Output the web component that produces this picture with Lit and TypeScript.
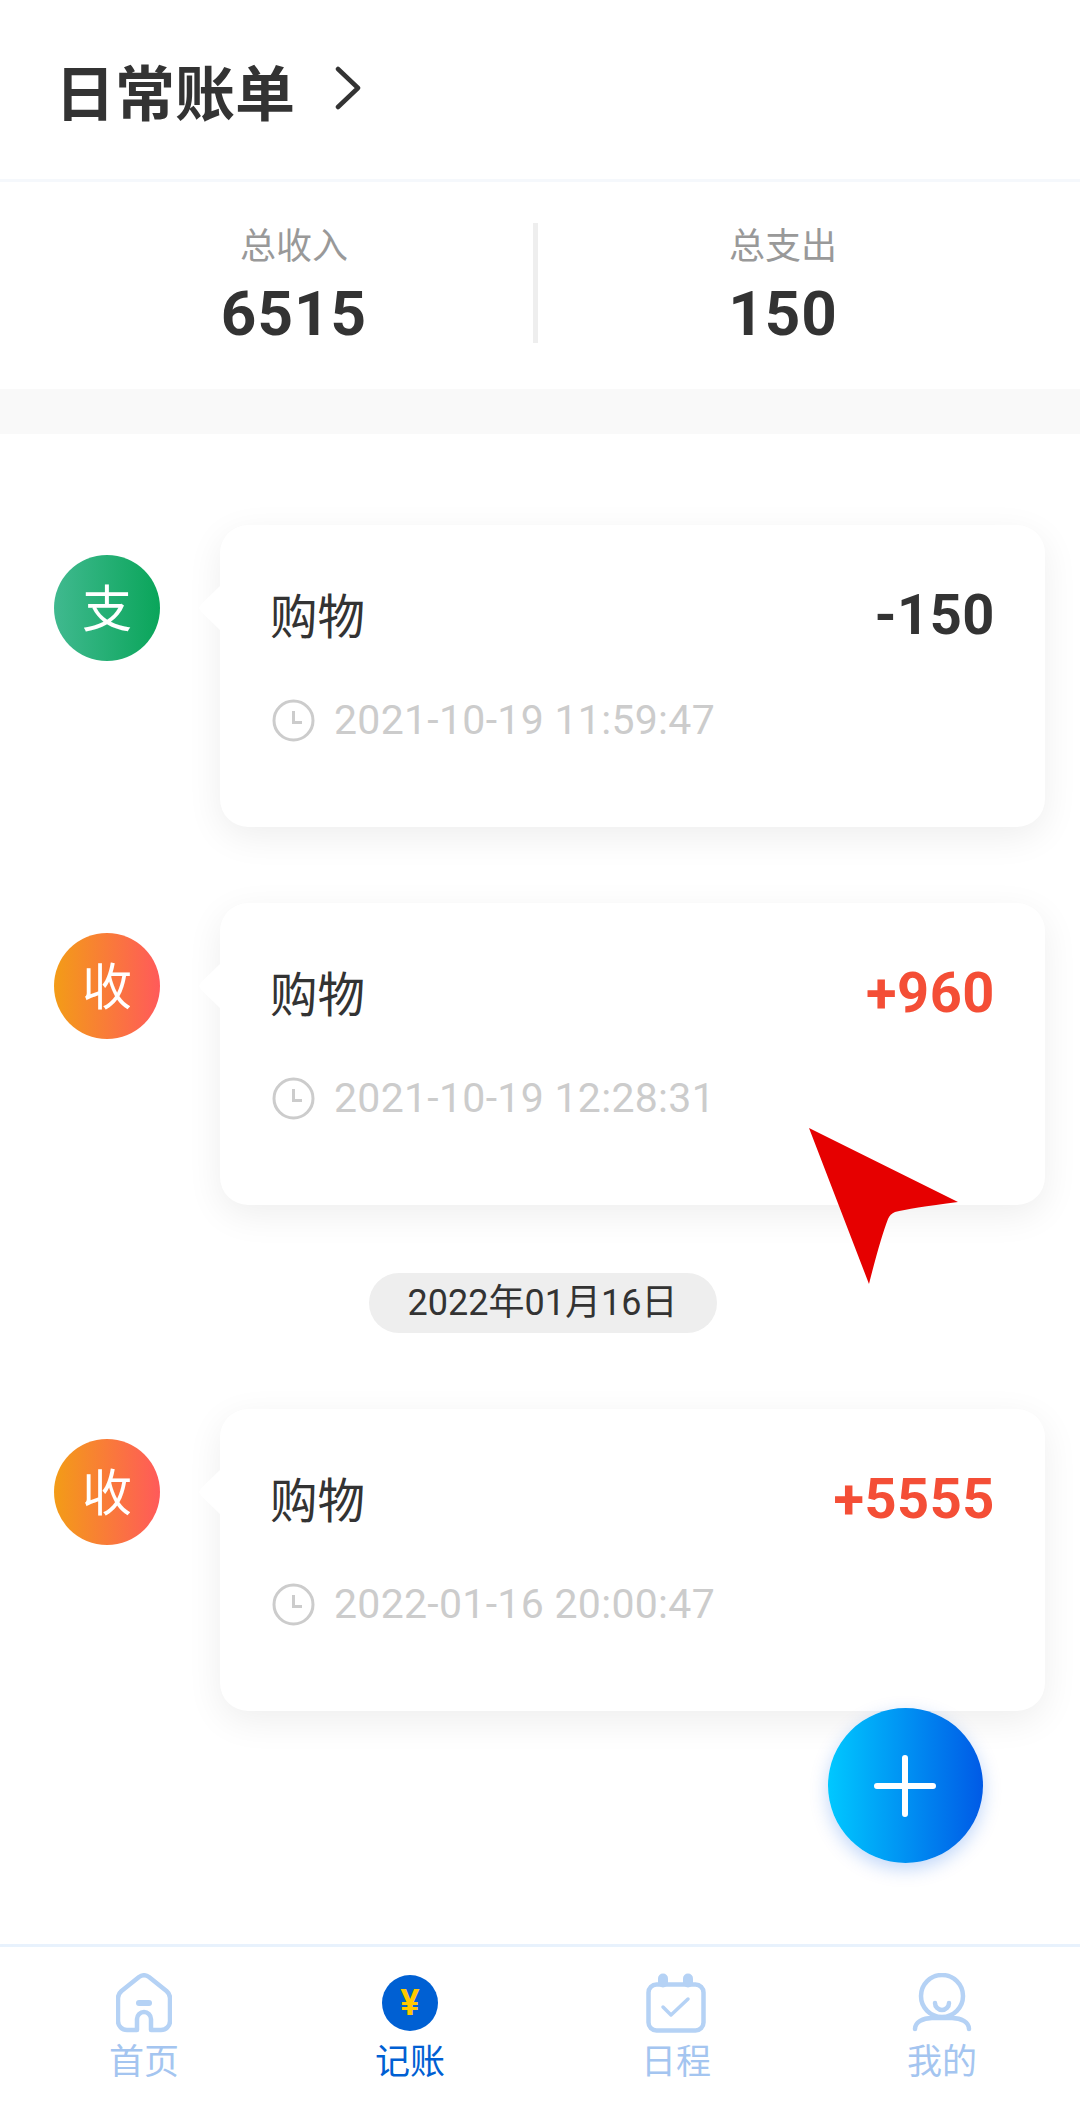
import { LitElement, html, css, svg } from 'lit';
import { customElement } from 'lit/decorators.js';
import { classMap } from 'lit/directives/class-map.js';

type Entry = { kind: 'in' | 'out'; amount: string; time: string };

const GROUPS: { date?: string; items: Entry[] }[] = [
  {
    items: [
      { kind: 'out', amount: '-150', time: '2021-10-19 11:59:47' },
      { kind: 'in', amount: '+960', time: '2021-10-19 12:28:31' },
    ],
  },
  {
    date: '2022年01月16日',
    items: [{ kind: 'in', amount: '+5555', time: '2022-01-16 20:00:47' }],
  },
];

const homeIcon = svg`<path d="M21 57H11a9 9 0 0 1-9-9V25q0-4 3.500-7L23 4q5-3.500 10 0l17.500 14q3.500 3 3.500 7v23a9 9 0 0 1-9 9H35V46a7 7 0 0 0-14 0z" fill="none" stroke="currentColor" stroke-width="4.500" stroke-linejoin="round"/><path d="M23 30h10" stroke="currentColor" stroke-width="6" stroke-linecap="round"/>`;
const calendarIcon = svg`<rect x="2.500" y="11.500" width="55" height="46" rx="8" fill="none" stroke="currentColor" stroke-width="4.500"/><rect x="12" y="0.500" width="10" height="14" rx="5" fill="currentColor"/><rect x="37" y="0.500" width="10" height="14" rx="5" fill="currentColor"/><path d="M17 34l8 8 17-16" fill="none" stroke="currentColor" stroke-width="3.500" stroke-linecap="round" stroke-linejoin="round"/>`;
const userIcon = svg`<circle cx="30" cy="23" r="21" fill="none" stroke="currentColor" stroke-width="4.500"/><path d="M23 30a7 7 0 0 0 14 0" fill="none" stroke="currentColor" stroke-width="4.500" stroke-linecap="round"/><path d="M3 56c0-7 8-11 17-11h20c9 0 17 4 17 11" fill="none" stroke="currentColor" stroke-width="4.500" stroke-linecap="round"/>`;

@customElement('app-root')
export class AppRoot extends LitElement {
  static styles = css`
    :host {
      display: block;
      position: relative;
      width: 1080px;
      height: 2120px;
      overflow: hidden;
      background: #fff;
      color: #333;
      font-family: Roboto, 'Noto Sans CJK SC', sans-serif;
    }

    .page {
      display: flex;
      flex-direction: column;
      height: 100%;
    }

    .header {
      display: flex;
      align-items: center;
      gap: 40px;
      height: 179px;
      flex: none;
      padding-left: 55px;
      border-bottom: 3px solid #f5f8fc;
      font-size: 60px;
      font-weight: 700;
    }

    .header svg {
      display: block;
      margin-top: -4px;
    }

    .stats {
      display: grid;
      grid-template-columns: 478px 5px 490px;
      align-items: start;
      height: 207px;
      flex: none;
      box-sizing: border-box;
      padding: 40px 0 0 55px;
    }

    .stat {
      display: flex;
      flex-direction: column;
      align-items: center;
    }

    .stat-label {
      font-size: 36px;
      line-height: 50px;
      color: #999;
    }

    .stat-value {
      margin-top: 4px;
      font-size: 62px;
      line-height: 76px;
      font-weight: 700;
      letter-spacing: 1px;
    }

    .divider {
      height: 120px;
      margin-top: 1px;
      background: #eee;
    }

    .band {
      height: 45px;
      flex: none;
      background: #f9f9f9;
    }

    .list {
      flex: 1;
      min-height: 0;
      padding-top: 91px;
    }

    .day {
      display: flex;
      justify-content: center;
      margin: -8px 0 76px;
      padding-left: 5px;
    }

    .pill {
      width: 348px;
      height: 60px;
      border-radius: 30px;
      background: #eee;
      font-size: 36px;
      line-height: 60px;
      text-align: center;
    }

    .row {
      display: flex;
      align-items: flex-start;
      padding: 0 35px 0 54px;
      margin-bottom: 76px;
    }

    .avatar {
      display: flex;
      align-items: center;
      justify-content: center;
      flex: none;
      width: 106px;
      height: 106px;
      margin: 30px 60px 0 0;
      padding-bottom: 6px;
      box-sizing: border-box;
      border-radius: 50%;
      color: #fff;
      font-size: 50px;
    }

    .avatar.out {
      background: linear-gradient(90deg, #40b98f, #0aa55a);
    }

    .avatar.in {
      background: linear-gradient(90deg, #f39c17, #ff5a5a);
    }

    .card {
      position: relative;
      flex: 1;
      height: 302px;
      box-sizing: border-box;
      padding: 50px 50px 0 52px;
      border-radius: 28px;
      background: #fff;
      box-shadow: 0 10px 36px rgba(0, 0, 0, 0.07);
    }

    .card::before {
      content: '';
      position: absolute;
      left: -21px;
      top: 60px;
      width: 22px;
      height: 46px;
      background: #fff;
      clip-path: polygon(100% 0, 100% 100%, 10% 58%, 0 50%, 10% 42%);
    }

    .top {
      display: flex;
      align-items: center;
      justify-content: space-between;
      height: 80px;
    }

    .title {
      margin: -4px 0 0 -2px;
      font-size: 47.500px;
    }

    .amount {
      font-size: 56px;
      font-weight: 700;
      letter-spacing: 0.5px;
    }

    .amount.in {
      color: #f44e36;
    }

    .time {
      display: flex;
      align-items: center;
      gap: 19px;
      height: 50px;
      margin-top: 40px;
      color: #ccc;
      font-size: 41px;
      letter-spacing: 0.3px;
    }

    .time svg {
      flex: none;
    }

    .tabs {
      display: grid;
      grid-template-columns: repeat(4, 266px);
      height: 173px;
      flex: none;
      padding-left: 11px;
      border-top: 3px solid #e8f2fd;
    }

    .tab {
      display: flex;
      flex-direction: column;
      align-items: center;
      padding-top: 26px;
      color: #a4c5f0;
      font-size: 35px;
      line-height: 60px;
    }

    .tab svg {
      display: block;
      color: #b5d2f5;
    }

    .tab.active {
      color: #0060d3;
    }

    .coin {
      display: flex;
      align-items: center;
      justify-content: center;
      width: 56px;
      height: 60px;
    }

    .coin span {
      display: block;
      width: 56px;
      height: 56px;
      border-radius: 50%;
      background: #0060d3;
      color: #ffc800;
      font-size: 36px;
      font-weight: 700;
      line-height: 56px;
      text-align: center;
    }

    .fab {
      position: absolute;
      left: 828px;
      top: 1708px;
      width: 155px;
      height: 155px;
      border-radius: 50%;
      background: linear-gradient(90deg, #00c8ff, #005ae6);
      box-shadow: 0 6px 18px rgba(0, 90, 230, 0.25);
    }

    .fab svg {
      display: block;
    }

    .pointer {
      position: absolute;
      left: 800px;
      top: 1120px;
    }
  `;

  private _clock() {
    return html`<svg width="43" height="43" viewBox="0 0 43 43" fill="none" stroke="#ccc" stroke-width="3">
      <circle cx="21.500" cy="21.500" r="19.500" />
      <path d="M21.500 12v11.500H30" />
    </svg>`;
  }

  private _entry(e: Entry) {
    return html`<div class="row">
      <div class="avatar ${e.kind}">${e.kind === 'in' ? '收' : '支'}</div>
      <div class="card">
        <div class="top">
          <span class="title">购物</span>
          <span class=${classMap({ amount: true, in: e.kind === 'in' })}>${e.amount}</span>
        </div>
        <div class="time">${this._clock()}<span>${e.time}</span></div>
      </div>
    </div>`;
  }

  private _tab(label: string, icon: unknown, width = 60) {
    return html`<div class="tab">
      <svg width=${width} height="60" viewBox="0 0 ${width} 60">${icon}</svg>
      ${label}
    </div>`;
  }

  render() {
    return html`
      <div class="page">
        <div class="header">
          <span>日常账单</span>
          <svg width="26" height="44" viewBox="0 0 26 44" fill="none" stroke="#333" stroke-width="4.500" stroke-linecap="round" stroke-linejoin="round">
            <path d="M3 3l20 19-20 19" />
          </svg>
        </div>
        <div class="stats">
          <div class="stat">
            <span class="stat-label">总收入</span>
            <span class="stat-value">6515</span>
          </div>
          <div class="divider"></div>
          <div class="stat">
            <span class="stat-label">总支出</span>
            <span class="stat-value">150</span>
          </div>
        </div>
        <div class="band"></div>
        <div class="list">
          ${GROUPS.map(
            (g) => html`
              ${g.date ? html`<div class="day"><div class="pill">${g.date}</div></div>` : ''}
              ${g.items.map((e) => this._entry(e))}
            `,
          )}
        </div>
        <div class="tabs">
          ${this._tab('首页', homeIcon, 56)}
          <div class="tab active">
            <div class="coin"><span>¥</span></div>
            记账
          </div>
          ${this._tab('日程', calendarIcon)}
          ${this._tab('我的', userIcon)}
        </div>
      </div>
      <div class="fab">
        <svg width="155" height="155" viewBox="0 0 155 155">
          <path d="M77 50v56M49 78h56" stroke="#fff" stroke-width="6" stroke-linecap="round" />
        </svg>
      </div>
      <svg class="pointer" width="170" height="170" viewBox="0 0 170 170">
        <path d="M9 8L158 82Q110 88 95 92Q90 94 88 99Q80 120 69 164Z" fill="#e60000" />
      </svg>
    `;
  }
}
